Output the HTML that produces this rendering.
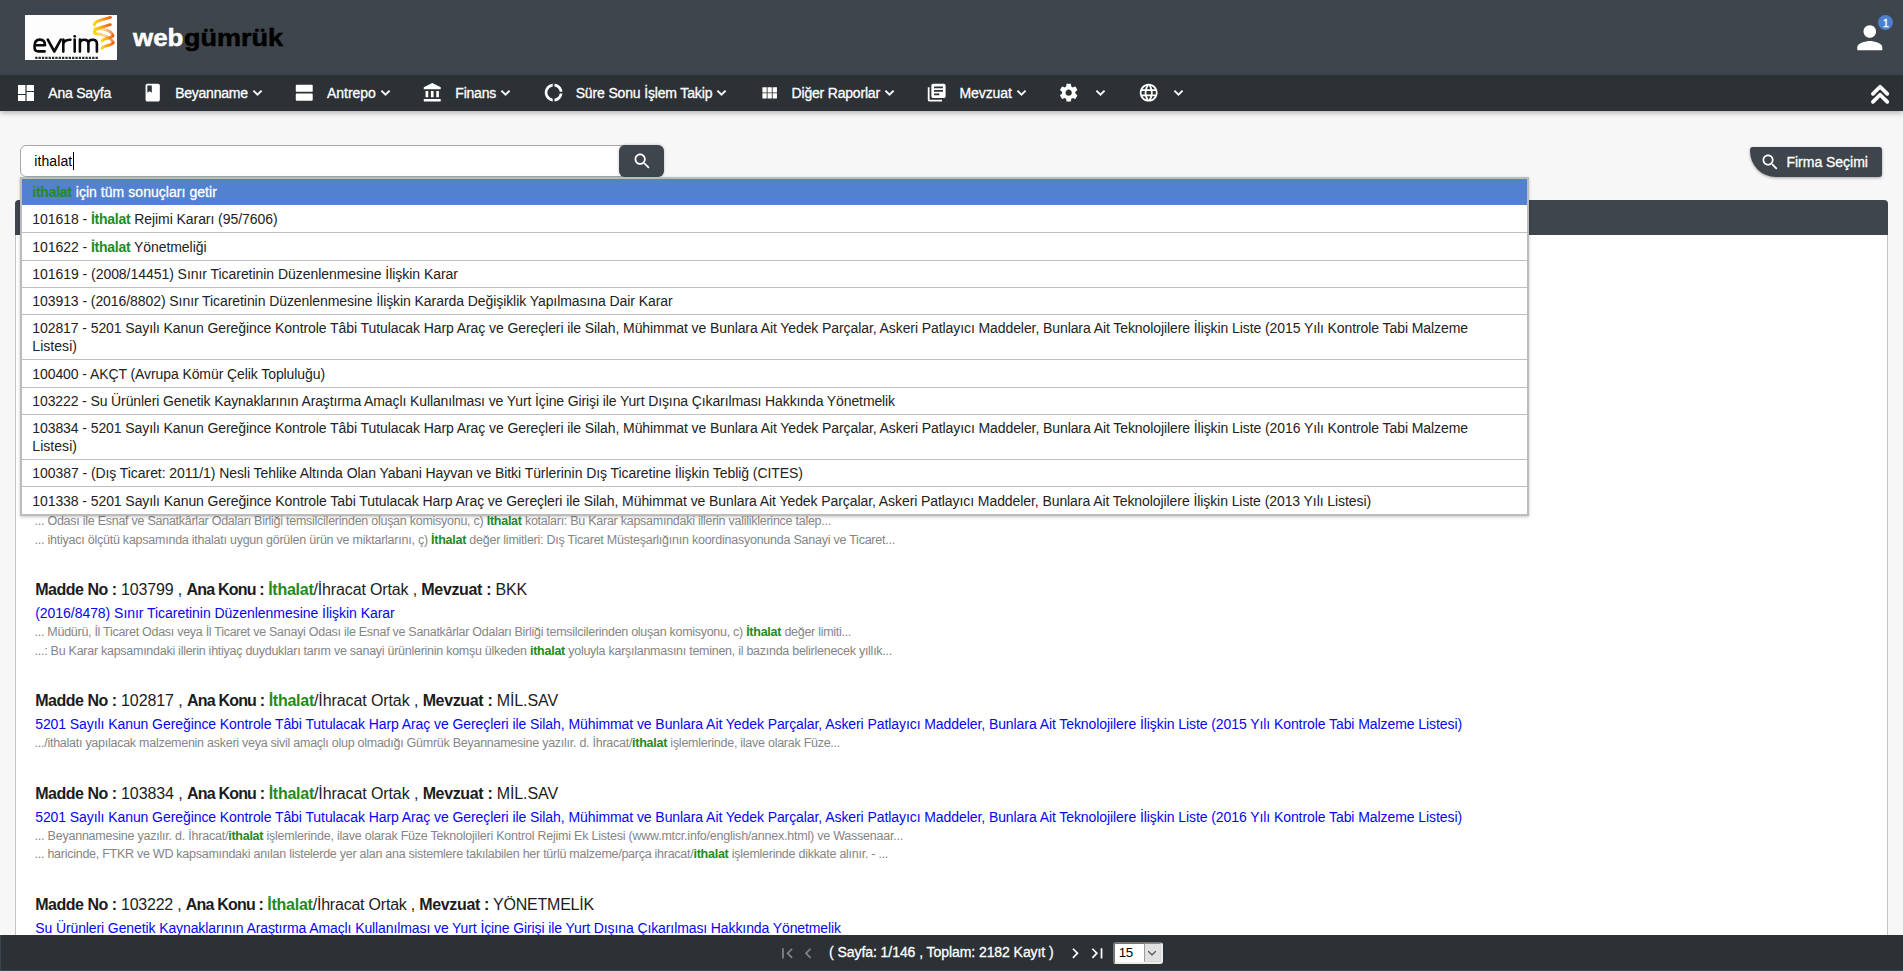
<!DOCTYPE html><html lang="tr"><head><meta charset="utf-8"><title>webgümrük</title><style>
*{box-sizing:border-box;margin:0;padding:0}
html,body{width:1903px;height:971px;overflow:hidden;background:#f7f7f7;font-family:"Liberation Sans",sans-serif}
body{position:relative}
.a{position:absolute}
.t{position:absolute;white-space:nowrap;line-height:20px;height:20px;font-weight:400}
.ic{position:absolute;display:block}
.hd{color:#1c1c1c}.w{color:#fff;-webkit-text-stroke:.3px #fff}.k{color:#000}.d{color:#222}.s{color:#858585}.lnk{color:#0505f5}
.bold{font-weight:700}.ttl{-webkit-text-stroke:.5px currentColor}
b{font-weight:700}
.hd b{letter-spacing:-.8px}.hd .m1{letter-spacing:-.47px}.hd .m3{letter-spacing:-.35px}.g,.hd .g{color:#228b22;-webkit-text-stroke:0 transparent;letter-spacing:-.25px}.g2{color:#228b22;font-weight:400}
#hdr{left:0;top:0;width:1903px;height:75px;background:#3e454c}
#nav{left:0;top:75px;width:1903px;height:35.5px;background:#2c3136;box-shadow:0 2px 5px rgba(0,0,0,.28)}
#logo{left:25px;top:15px;width:92px;height:45px;background:#fdfdfd}
#inp{left:20px;top:145px;width:610px;height:32px;background:#fff;border:1px solid #a6a6a6;border-radius:6px}
#sbtn{left:619px;top:145px;width:45px;height:32px;background:#3e454c;border-radius:6px;box-shadow:0 0 3px rgba(0,0,0,.25)}
#caret{left:73px;top:152px;width:1px;height:17.5px;background:#000}
#firma{left:1750px;top:147px;width:132px;height:30px;background:#3e454c;border-radius:3px 3px 3px 26px;box-shadow:0 1px 3px rgba(0,0,0,.35)}
#panel{left:15px;top:200px;width:1873px;height:771px;background:#fff;border:1px solid #c4c4c4;border-radius:4px 4px 0 0}
#phead{left:15px;top:200px;width:1873px;height:35px;background:#3e454c;border-radius:4px 4px 0 0}
#dd{left:20px;top:177px;width:1509px;height:339px;background:#fff;border:2px solid #bdbcba;box-shadow:0 1px 3px rgba(0,0,0,.22)}
#ddsel{left:22px;top:179px;width:1505px;height:26px;background:#5181cf}
.hl{position:absolute;left:22px;width:1505px;height:1px;background:#bfbfbf}
#foot{left:0;top:935px;width:1903px;height:36px;background:#2c3136;border-bottom:1px solid #40474e;border-left:1px solid #3e454c}
#sel{left:1112.5px;top:941.5px;width:50.7px;height:22.5px;background:#fff;border:2px solid;border-color:#767676 #ececec #ececec #767676;border-radius:3px}
#selb{left:1144.3px;top:943.2px;width:16.8px;height:18.8px;background:#e1e1e1;border:1px solid;border-color:#8d8d8d #d8d8d8 #d8d8d8 #9d9d9d}
#badge{left:1877.9px;top:14.9px;width:15.3px;height:15.3px;border-radius:50%;background:#4d7fd1}
</style></head><body>
<div class="a" id="hdr"></div>
<div class="a" id="panel"></div><div class="a" id="phead"></div>
<span class="t s" id="t24" style="left:34.60px;top:511.00px;font-size:12.5px;letter-spacing:-0.260px;">... Odası ile Esnaf ve Sanatkârlar Odaları Birliği temsilcilerinden oluşan komisyonu, c) <b class="g">İthalat</b> kotaları: Bu Karar kapsamındaki illerin valiliklerince talep...</span>
<span class="t s" id="t25" style="left:34.60px;top:530.00px;font-size:12.5px;letter-spacing:-0.241px;">... ihtiyacı ölçütü kapsamında ithalatı uygun görülen ürün ve miktarlarını, ç) <b class="g">İthalat</b> değer limitleri: Dış Ticaret Müsteşarlığının koordinasyonunda Sanayi ve Ticaret...</span>
<span class="t hd" id="t26" style="left:35.20px;top:580.00px;font-size:16px;letter-spacing:-0.142px;"><b class="m1">Madde No :</b> 103799 , <b>Ana Konu :</b> <b class="g">İthalat</b>/İhracat Ortak , <b class="m3">Mevzuat :</b> BKK</span>
<span class="t lnk" id="t27" style="left:35.20px;top:603.00px;font-size:14px;letter-spacing:-0.041px;">(2016/8478) Sınır Ticaretinin Düzenlenmesine İlişkin Karar</span>
<span class="t s" id="t28" style="left:34.60px;top:622.00px;font-size:12.5px;letter-spacing:-0.282px;">... Müdürü, İl Ticaret Odası veya İl Ticaret ve Sanayi Odası ile Esnaf ve Sanatkârlar Odaları Birliği temsilcilerinden oluşan komisyonu, c) <b class="g">İthalat</b> değer limiti...</span>
<span class="t s" id="t29" style="left:34.60px;top:641.00px;font-size:12.5px;letter-spacing:-0.268px;">...: Bu Karar kapsamındaki illerin ihtiyaç duydukları tarım ve sanayi ürünlerinin komşu ülkeden <b class="g">ithalat</b> yoluyla karşılanmasını teminen, il bazında belirlenecek yıllık...</span>
<span class="t hd" id="t30" style="left:35.20px;top:691.00px;font-size:16px;letter-spacing:-0.096px;"><b class="m1">Madde No :</b> 102817 , <b>Ana Konu :</b> <b class="g">İthalat</b>/İhracat Ortak , <b class="m3">Mevzuat :</b> MİL.SAV</span>
<span class="t lnk" id="t31" style="left:35.20px;top:714.00px;font-size:14px;letter-spacing:-0.077px;">5201 Sayılı Kanun Gereğince Kontrole Tâbi Tutulacak Harp Araç ve Gereçleri ile Silah, Mühimmat ve Bunlara Ait Yedek Parçalar, Askeri Patlayıcı Maddeler, Bunlara Ait Teknolojilere İlişkin Liste (2015 Yılı Kontrole Tabi Malzeme Listesi)</span>
<span class="t s" id="t32" style="left:34.60px;top:733.00px;font-size:12.5px;letter-spacing:-0.262px;">.../ithalatı yapılacak malzemenin askeri veya sivil amaçlı olup olmadığı Gümrük Beyannamesine yazılır. d. İhracat/<b class="g">ithalat</b> işlemlerinde, ilave olarak Füze...</span>
<span class="t hd" id="t33" style="left:35.20px;top:784.00px;font-size:16px;letter-spacing:-0.096px;"><b class="m1">Madde No :</b> 103834 , <b>Ana Konu :</b> <b class="g">İthalat</b>/İhracat Ortak , <b class="m3">Mevzuat :</b> MİL.SAV</span>
<span class="t lnk" id="t34" style="left:35.20px;top:807.00px;font-size:14px;letter-spacing:-0.077px;">5201 Sayılı Kanun Gereğince Kontrole Tâbi Tutulacak Harp Araç ve Gereçleri ile Silah, Mühimmat ve Bunlara Ait Yedek Parçalar, Askeri Patlayıcı Maddeler, Bunlara Ait Teknolojilere İlişkin Liste (2016 Yılı Kontrole Tabi Malzeme Listesi)</span>
<span class="t s" id="t35" style="left:34.60px;top:826.00px;font-size:12.5px;letter-spacing:-0.227px;">... Beyannamesine yazılır. d. İhracat/<b class="g">ithalat</b> işlemlerinde, ilave olarak Füze Teknolojileri Kontrol Rejimi Ek Listesi (www.mtcr.info/english/annex.html) ve Wassenaar...</span>
<span class="t s" id="t36" style="left:34.60px;top:844.00px;font-size:12.5px;letter-spacing:-0.265px;">... haricinde, FTKR ve WD kapsamındaki anılan listelerde yer alan ana sistemlere takılabilen her türlü malzeme/parça ihracat/<b class="g">ithalat</b> işlemlerinde dikkate alınır. - ...</span>
<span class="t hd" id="t37" style="left:35.20px;top:895.00px;font-size:16px;letter-spacing:-0.215px;"><b class="m1">Madde No :</b> 103222 , <b>Ana Konu :</b> <b class="g">İthalat</b>/İhracat Ortak , <b class="m3">Mevzuat :</b> YÖNETMELİK</span>
<span class="t lnk" id="t38" style="left:35.20px;top:918.00px;font-size:14px;letter-spacing:-0.103px;">Su Ürünleri Genetik Kaynaklarının Araştırma Amaçlı Kullanılması ve Yurt İçine Girişi ile Yurt Dışına Çıkarılması Hakkında Yönetmelik</span>
<div class="a" id="foot"></div><div class="a" id="sel"></div><div class="a" id="selb"></div>
<svg class="ic" style="left:1146.2px;top:946.5px" width="12" height="12" viewBox="0 0 12 12"><path d="M2.200 4.200L6 8l3.800-3.800" fill="none" stroke="#444" stroke-width="1.200"/></svg>
<div class="a" id="nav"></div>
<svg class="ic" style="left:25px;top:15px" width="92" height="45" viewBox="0 0 92 45">
<defs><linearGradient id="og" x1="0" y1="0" x2="1" y2="0"><stop offset="0" stop-color="#ffd60a"/><stop offset=".45" stop-color="#fca311"/><stop offset="1" stop-color="#ef5f17"/></linearGradient>
<linearGradient id="pg" x1="0" y1="0" x2="1" y2="0"><stop offset="0" stop-color="#ffd60a"/><stop offset=".5" stop-color="#fbd3a4"/><stop offset="1" stop-color="#f4893a"/></linearGradient></defs>
<rect width="92" height="45" fill="#fdfdfd"/>
<g fill="none" stroke="#0a0a0a" stroke-width="2.600" stroke-linecap="round" stroke-linejoin="round">
<path d="M9.800 30.200H20C20 26.500 18.200 24.600 14.800 24.600C11.300 24.600 9.600 26.800 9.600 30.500V32.500C9.600 35.200 11 36.400 13.500 36.400H19.600"/>
<path d="M22.800 24.700L29.300 36.500L35.800 24.700"/>
<path d="M38.300 24.500V36.600M38.300 29.500C38.300 26 40.500 24.700 45.400 24.700"/>
<path d="M49.700 24.500V36.600"/>
<path d="M54.900 24.500V36.600M54.900 28.600C54.900 25.700 56.500 24.700 59.200 24.700C62 24.700 63.400 25.900 63.400 28.600V36.600M63.400 28.600C63.400 25.700 65 24.700 67.700 24.700C70.500 24.700 71.900 25.900 71.900 28.600V36.600"/>
</g>
<circle cx="49.700" cy="21.300" r="1.350" fill="#0a0a0a"/>
<g fill="none" stroke-width="2.800" stroke-linecap="round">
<path d="M70 13.800C76 13.300 87 15 88 21" stroke="url(#pg)"/>
<path d="M70 18.500C76 19 87 22 88.200 28" stroke="url(#pg)"/>
<path d="M69.300 9.800C69 6 78 4.600 85.500 2.400" stroke="url(#og)"/>
<path d="M69.300 17.300C69 13.200 78 12 85.400 9.700" stroke="url(#og)"/>
<path d="M77 26C78 23 86.500 23.800 88 20.500" stroke="url(#og)"/>
<path d="M77 33.400C78 30.400 86.500 31 88.200 27.600" stroke="url(#og)"/>
</g>
<path d="M10.200 42.900H73" fill="none" stroke="#2a2a2a" stroke-width="2.300" stroke-dasharray="2.300 1.050"/>
</svg>
<div class="a" id="inp"></div><div class="a" id="sbtn"></div><div class="a" id="caret"></div>
<div class="a" id="firma"></div>
<div class="a" id="badge"></div>
<svg class="ic" style="left:1868px;top:81px" width="24" height="25" viewBox="0 0 24 25"><path d="M4.900 12.900L12.100 5.700 19.300 12.900M4.900 20.900L12.100 13.700 19.300 20.900" fill="none" stroke="#fff" stroke-width="3.700" stroke-linecap="round" stroke-linejoin="round"/></svg>
<svg class="ic" style="left:17.9px;top:84.9px" width="16.2" height="16.2" viewBox="0 0 16.2 16.2"><path fill="#fff" d="M0 0h7.400v8.900H0zM0 10.100h7.400v6.100H0zM8.600 0h7.600v5.900H8.600zM8.600 7.100h7.600v9.100H8.600z"/></svg>
<svg class="ic" style="left:142.40px;top:82.05px" width="21.40" height="21.40" viewBox="0 0 24 24"><path fill="#fff" d="M18 2H6c-1.100 0-2 .9-2 2v16c0 1.100.9 2 2 2h12c1.100 0 2-.9 2-2V4c0-1.100-.9-2-2-2zM6 4h5v8l-2.500-1.500L6 12V4z"/></svg>
<svg class="ic" style="left:294.15px;top:82.05px" width="21.40" height="21.40" viewBox="0 0 24 24"><path fill="#fff" d="M20 13H3c-.55 0-1 .45-1 1v6c0 .55.45 1 1 1h17c.55 0 1-.45 1-1v-6c0-.55-.45-1-1-1zm0-10H3c-.55 0-1 .45-1 1v6c0 .55.45 1 1 1h17c.55 0 1-.45 1-1V4c0-.55-.45-1-1-1z"/></svg>
<svg class="ic" style="left:422.30px;top:82.45px" width="21.40" height="21.40" viewBox="0 0 24 24"><path fill="#fff" d="M4 10v7h3v-7H4zm6 0v7h3v-7h-3zM2 22h19v-3H2v3zm14-12v7h3v-7h-3zm-4.500-9L2 6v2h19V6l-9.500-5z"/></svg>
<svg class="ic" style="left:542.90px;top:82.25px" width="21.20" height="21.20" viewBox="0 0 24 24"><path fill="#fff" d="M11 5.080V2c-5 .5-9 4.810-9 10s4 9.500 9 10v-3.080c-3-.48-6-3.400-6-6.920s3-6.440 6-6.920zM18.970 11H22c-.47-5-4-8.530-9-9v3.080C16 5.510 18.540 8 18.970 11zM13 18.920V22c5-.47 8.530-4 9-9h-3.030c-.43 3-2.970 5.490-5.970 5.920z"/></svg>
<svg class="ic" style="left:759.05px;top:82.55px" width="20.50" height="20.50" viewBox="0 0 24 24"><path fill="#fff" d="M4 11h5V5H4v6zm0 7h5v-6H4v6zm6 0h5v-6h-5v6zm6 0h5v-6h-5v6zm-6-7h5V5h-5v6zm6-6v6h5V5h-5z"/></svg>
<svg class="ic" style="left:926.30px;top:82.05px" width="21.40" height="21.40" viewBox="0 0 24 24"><path fill="#fff" d="M4 6H2v14c0 1.100.9 2 2 2h14v-2H4V6zm16-4H8c-1.100 0-2 .9-2 2v12c0 1.100.9 2 2 2h12c1.100 0 2-.9 2-2V4c0-1.100-.9-2-2-2zm-1 9H9V9h10v2zm-4 4H9v-2h6v2zm4-8H9V5h10v2z"/></svg>
<svg class="ic" style="left:1058.30px;top:82.25px" width="21.40" height="21.40" viewBox="0 0 24 24"><path fill="#fff" d="M19.430 12.980c.04-.32.07-.64.07-.98s-.03-.66-.07-.98l2.110-1.650c.19-.15.24-.42.12-.64l-2-3.460c-.12-.22-.39-.3-.61-.22l-2.490 1c-.52-.4-1.080-.73-1.690-.98l-.38-2.650C14.460 2.180 14.250 2 14 2h-4c-.25 0-.46.18-.49.42l-.38 2.650c-.61.25-1.170.59-1.690.98l-2.490-1c-.23-.09-.49 0-.61.22l-2 3.460c-.13.22-.07.49.12.64l2.110 1.650c-.04.32-.07.65-.07.98s.03.66.07.98l-2.110 1.650c-.19.15-.24.42-.12.64l2 3.460c.12.22.39.3.61.22l2.490-1c.52.4 1.080.73 1.690.98l.38 2.650c.03.24.24.42.49.42h4c.25 0 .46-.18.49-.42l.38-2.650c.61-.25 1.170-.59 1.690-.98l2.490 1c.23.09.49 0 .61-.22l2-3.460c.12-.22.07-.49-.12-.64l-2.110-1.650zM12 15.500c-1.930 0-3.500-1.570-3.500-3.500s1.570-3.500 3.500-3.500 3.500 1.570 3.500 3.500-1.570 3.500-3.500 3.500z"/></svg>
<svg class="ic" style="left:1137.80px;top:82.25px" width="21.40" height="21.40" viewBox="0 0 24 24"><path fill="#fff" d="M11.990 2C6.470 2 2 6.480 2 12s4.470 10 9.990 10C17.520 22 22 17.520 22 12S17.520 2 11.990 2zm6.930 6h-2.950c-.32-1.250-.78-2.450-1.380-3.560 1.840.63 3.370 1.910 4.330 3.560zM12 4.040c.83 1.200 1.480 2.530 1.910 3.960h-3.820c.43-1.430 1.080-2.760 1.910-3.960zM4.260 14C4.100 13.360 4 12.690 4 12s.1-1.360.26-2h3.380c-.08.66-.14 1.320-.14 2 0 .68.06 1.340.14 2H4.260zm.82 2h2.950c.32 1.250.78 2.450 1.380 3.560-1.840-.63-3.370-1.900-4.330-3.560zm2.950-8H5.080c.96-1.660 2.490-2.930 4.330-3.560C8.810 5.550 8.350 6.750 8.030 8zM12 19.960c-.83-1.200-1.480-2.530-1.910-3.960h3.820c-.43 1.430-1.080 2.760-1.910 3.960zM14.340 14H9.660c-.09-.66-.16-1.320-.16-2 0-.68.07-1.350.16-2h4.680c.09.65.16 1.320.16 2 0 .68-.07 1.340-.16 2zm.25 5.560c.6-1.110 1.060-2.310 1.380-3.560h2.950c-.96 1.650-2.490 2.930-4.330 3.560zM16.360 14c.08-.66.14-1.320.14-2 0-.68-.06-1.340-.14-2h3.380c.16.64.26 1.310.26 2s-.1 1.360-.26 2h-3.380z"/></svg>
<svg class="ic" style="left:251.70px;top:89.2px" width="11" height="8" viewBox="0 0 11 8"><path d="M1.400 1.600L5.500 5.700 9.600 1.600" fill="none" stroke="#fff" stroke-width="1.850"/></svg>
<svg class="ic" style="left:380.00px;top:89.2px" width="11" height="8" viewBox="0 0 11 8"><path d="M1.400 1.600L5.500 5.700 9.600 1.600" fill="none" stroke="#fff" stroke-width="1.850"/></svg>
<svg class="ic" style="left:500.00px;top:89.2px" width="11" height="8" viewBox="0 0 11 8"><path d="M1.400 1.600L5.500 5.700 9.600 1.600" fill="none" stroke="#fff" stroke-width="1.850"/></svg>
<svg class="ic" style="left:716.00px;top:89.2px" width="11" height="8" viewBox="0 0 11 8"><path d="M1.400 1.600L5.500 5.700 9.600 1.600" fill="none" stroke="#fff" stroke-width="1.850"/></svg>
<svg class="ic" style="left:883.70px;top:89.2px" width="11" height="8" viewBox="0 0 11 8"><path d="M1.400 1.600L5.500 5.700 9.600 1.600" fill="none" stroke="#fff" stroke-width="1.850"/></svg>
<svg class="ic" style="left:1015.80px;top:89.2px" width="11" height="8" viewBox="0 0 11 8"><path d="M1.400 1.600L5.500 5.700 9.600 1.600" fill="none" stroke="#fff" stroke-width="1.850"/></svg>
<svg class="ic" style="left:1094.60px;top:89.2px" width="11" height="8" viewBox="0 0 11 8"><path d="M1.400 1.600L5.500 5.700 9.600 1.600" fill="none" stroke="#fff" stroke-width="1.850"/></svg>
<svg class="ic" style="left:1173.30px;top:89.2px" width="11" height="8" viewBox="0 0 11 8"><path d="M1.400 1.600L5.500 5.700 9.600 1.600" fill="none" stroke="#fff" stroke-width="1.850"/></svg>
<svg class="ic" style="left:631.80px;top:151.00px" width="20.60" height="20.60" viewBox="0 0 24 24"><path fill="#fff" d="M15.500 14h-.79l-.28-.27C15.410 12.590 16 11.110 16 9.500 16 5.910 13.090 3 9.500 3S3 5.910 3 9.500 5.910 16 9.500 16c1.610 0 3.090-.59 4.230-1.570l.27.28v.79l5 4.990L20.490 19l-4.990-5zm-6 0C7.010 14 5 11.990 5 9.500S7.010 5 9.500 5 14 7.010 14 9.500 11.990 14 9.500 14z"/></svg>
<svg class="ic" style="left:1760.10px;top:152.00px" width="20.40" height="20.40" viewBox="0 0 24 24"><path fill="#fff" d="M15.500 14h-.79l-.28-.27C15.410 12.590 16 11.110 16 9.500 16 5.910 13.090 3 9.500 3S3 5.910 3 9.500 5.910 16 9.500 16c1.610 0 3.090-.59 4.230-1.570l.27.28v.79l5 4.990L20.490 19l-4.990-5zm-6 0C7.010 14 5 11.990 5 9.500S7.010 5 9.500 5 14 7.010 14 9.500 11.990 14 9.500 14z"/></svg>
<svg class="ic" style="left:1851.30px;top:18.90px" width="37.60" height="37.60" viewBox="0 0 24 24"><path fill="#fff" d="M12 12c2.210 0 4-1.790 4-4s-1.790-4-4-4-4 1.790-4 4 1.790 4 4 4zm0 2c-2.670 0-8 1.340-8 4v2h16v-2c0-2.660-5.330-4-8-4z"/></svg>
<svg class="ic" style="left:776.60px;top:942.75px" width="20.50" height="20.50" viewBox="0 0 24 24"><path fill="#84878a" d="M18.410 16.590L13.820 12l4.590-4.590L17 6l-6 6 6 6zM6 6h2v12H6z"/></svg>
<svg class="ic" style="left:798.30px;top:942.75px" width="20.50" height="20.50" viewBox="0 0 24 24"><path fill="#84878a" d="M15.410 7.410L14 6l-6 6 6 6 1.410-1.410L10.830 12z"/></svg>
<svg class="ic" style="left:1064.90px;top:942.75px" width="20.50" height="20.50" viewBox="0 0 24 24"><path fill="#fff" d="M10 6L8.590 7.410 13.170 12l-4.580 4.590L10 18l6-6z"/></svg>
<svg class="ic" style="left:1087.05px;top:942.75px" width="20.50" height="20.50" viewBox="0 0 24 24"><path fill="#fff" d="M5.590 7.410L10.180 12l-4.590 4.590L7 18l6-6-6-6zM16 6h2v12h-2z"/></svg>
<div class="a" id="dd"></div><div class="a" id="ddsel"></div>
<div class="hl" style="top:232.0px"></div>
<div class="hl" style="top:260.0px"></div>
<div class="hl" style="top:287.0px"></div>
<div class="hl" style="top:314.0px"></div>
<div class="hl" style="top:359.0px"></div>
<div class="hl" style="top:387.0px"></div>
<div class="hl" style="top:414.0px"></div>
<div class="hl" style="top:459.0px"></div>
<div class="hl" style="top:486.0px"></div>
<span class="t w" id="t0" style="left:48.30px;top:83.00px;font-size:14px;letter-spacing:-0.212px;">Ana Sayfa</span>
<span class="t w" id="t1" style="left:175.20px;top:83.00px;font-size:14px;letter-spacing:-0.247px;">Beyanname</span>
<span class="t w" id="t2" style="left:327.00px;top:83.00px;font-size:14px;letter-spacing:-0.021px;">Antrepo</span>
<span class="t w" id="t3" style="left:455.30px;top:83.00px;font-size:14px;letter-spacing:-0.222px;">Finans</span>
<span class="t w" id="t4" style="left:575.70px;top:83.00px;font-size:14px;letter-spacing:-0.154px;">Süre Sonu İşlem Takip</span>
<span class="t w" id="t5" style="left:791.60px;top:83.00px;font-size:14px;letter-spacing:-0.196px;">Diğer Raporlar</span>
<span class="t w" id="t6" style="left:959.50px;top:83.00px;font-size:14px;letter-spacing:-0.089px;">Mevzuat</span>
<span class="t w bold ttl" id="t7" style="left:133.20px;top:28.00px;font-size:24px;transform-origin:0 0;transform:scaleX(1.0795);">web</span>
<span class="t k bold ttl" id="t8" style="left:183.60px;top:28.00px;font-size:24px;transform-origin:0 0;transform:scaleX(1.1259);">gümrük</span>
<span class="t k" id="t9" style="left:34.30px;top:151.00px;font-size:14px;letter-spacing:0.092px;">ithalat</span>
<span class="t w" id="t10" style="left:1786.50px;top:152.40px;font-size:14px;letter-spacing:-0.023px;">Firma Seçimi</span>
<span class="t w" id="t11" style="left:32.30px;top:182.00px;font-size:14px;letter-spacing:0.047px;"><b class="g">ithalat</b> için tüm sonuçları getir</span>
<span class="t d" id="t12" style="left:32.30px;top:209.00px;font-size:14px;letter-spacing:-0.063px;">101618 - <b class="g">İthalat</b> Rejimi Kararı (95/7606)</span>
<span class="t d" id="t13" style="left:32.30px;top:237.00px;font-size:14px;letter-spacing:-0.060px;">101622 - <b class="g">İthalat</b> Yönetmeliği</span>
<span class="t d" id="t14" style="left:32.30px;top:264.00px;font-size:14px;letter-spacing:-0.047px;">101619 - (2008/14451) Sınır Ticaretinin Düzenlenmesine İlişkin Karar</span>
<span class="t d" id="t15" style="left:32.30px;top:291.00px;font-size:14px;letter-spacing:-0.072px;">103913 - (2016/8802) Sınır Ticaretinin Düzenlenmesine İlişkin Kararda Değişiklik Yapılmasına Dair Karar</span>
<span class="t d" id="t16" style="left:32.30px;top:318.00px;font-size:14px;letter-spacing:-0.086px;">102817 - 5201 Sayılı Kanun Gereğince Kontrole Tâbi Tutulacak Harp Araç ve Gereçleri ile Silah, Mühimmat ve Bunlara Ait Yedek Parçalar, Askeri Patlayıcı Maddeler, Bunlara Ait Teknolojilere İlişkin Liste (2015 Yılı Kontrole Tabi Malzeme</span>
<span class="t d" id="t17" style="left:32.30px;top:336.00px;font-size:14px;letter-spacing:0.043px;">Listesi)</span>
<span class="t d" id="t18" style="left:32.30px;top:364.00px;font-size:14px;letter-spacing:-0.086px;">100400 - AKÇT (Avrupa Kömür Çelik Topluluğu)</span>
<span class="t d" id="t19" style="left:32.30px;top:391.00px;font-size:14px;letter-spacing:-0.112px;">103222 - Su Ürünleri Genetik Kaynaklarının Araştırma Amaçlı Kullanılması ve Yurt İçine Girişi ile Yurt Dışına Çıkarılması Hakkında Yönetmelik</span>
<span class="t d" id="t20" style="left:32.30px;top:418.00px;font-size:14px;letter-spacing:-0.086px;">103834 - 5201 Sayılı Kanun Gereğince Kontrole Tâbi Tutulacak Harp Araç ve Gereçleri ile Silah, Mühimmat ve Bunlara Ait Yedek Parçalar, Askeri Patlayıcı Maddeler, Bunlara Ait Teknolojilere İlişkin Liste (2016 Yılı Kontrole Tabi Malzeme</span>
<span class="t d" id="t21" style="left:32.30px;top:436.00px;font-size:14px;letter-spacing:0.043px;">Listesi)</span>
<span class="t d" id="t22" style="left:32.30px;top:463.00px;font-size:14px;letter-spacing:-0.064px;">100387 - (Dış Ticaret: 2011/1) Nesli Tehlike Altında Olan Yabani Hayvan ve Bitki Türlerinin Dış Ticaretine İlişkin Tebliğ (CITES)</span>
<span class="t d" id="t23" style="left:32.30px;top:491.00px;font-size:14px;letter-spacing:-0.080px;">101338 - 5201 Sayılı Kanun Gereğince Kontrole Tabi Tutulacak Harp Araç ve Gereçleri ile Silah, Mühimmat ve Bunlara Ait Yedek Parçalar, Askeri Patlayıcı Maddeler, Bunlara Ait Teknolojilere İlişkin Liste (2013 Yılı Listesi)</span>
<span class="t w" id="t39" style="left:829.10px;top:942.00px;font-size:14px;letter-spacing:-0.067px;">( Sayfa: 1/146 , Toplam: 2182 Kayıt )</span>
<span class="t k" id="t40" style="left:1118.70px;top:943.00px;font-size:13.3px;letter-spacing:-0.248px;">15</span>
<span class="t w" id="t41" style="left:1882.70px;top:12.80px;font-size:11px;letter-spacing:-0.325px;">1</span>
</body></html>
